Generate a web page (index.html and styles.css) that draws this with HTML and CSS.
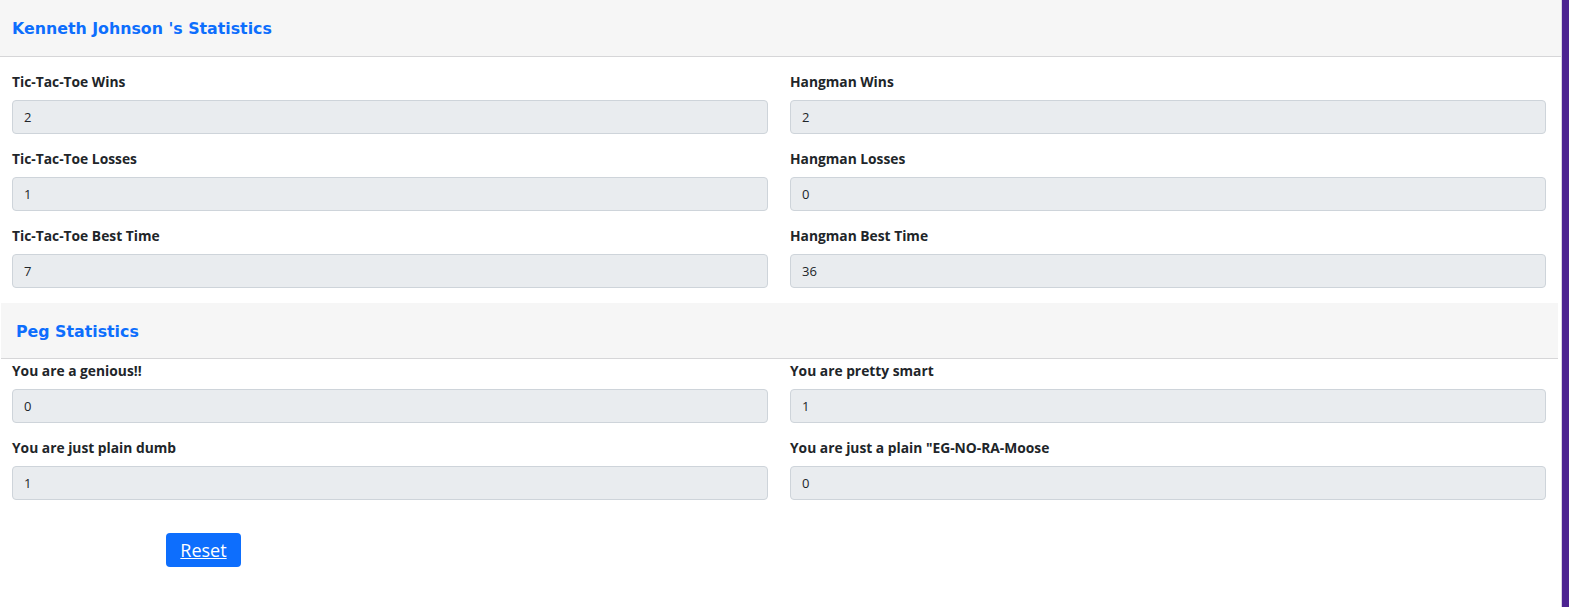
FILE: index.html
```html
<!DOCTYPE html>
<html>
<head>
<meta charset="utf-8">
<link rel="stylesheet" href="styles.css">
</head>
<body>
<div class="page">
  <main class="main">
    <section class="card">
      <div class="card-header"><h2 class="title">Kenneth Johnson 's Statistics</h2></div>
      <div class="card-body">
        <div class="grid">
          <div class="field"><label class="label">Tic-Tac-Toe Wins</label><div class="input">2</div></div>
          <div class="field"><label class="label">Hangman Wins</label><div class="input">2</div></div>
          <div class="field"><label class="label">Tic-Tac-Toe Losses</label><div class="input">1</div></div>
          <div class="field"><label class="label">Hangman Losses</label><div class="input">0</div></div>
          <div class="field"><label class="label">Tic-Tac-Toe Best Time</label><div class="input">7</div></div>
          <div class="field"><label class="label">Hangman Best Time</label><div class="input">36</div></div>
        </div>
      </div>
    </section>
    <section class="card peg">
      <div class="card-header peg-header"><h2 class="title peg-title">Peg Statistics</h2></div>
      <div class="card-body peg-body">
        <div class="grid">
          <div class="field"><label class="label">You are a genious!!</label><div class="input">0</div></div>
          <div class="field"><label class="label">You are pretty smart</label><div class="input">1</div></div>
          <div class="field"><label class="label">You are just plain dumb</label><div class="input">1</div></div>
          <div class="field"><label class="label">You are just a plain "EG-NO-RA-Moose</label><div class="input">0</div></div>
        </div>
        <div class="actions"><a class="btn" href="#">Reset</a></div>
      </div>
    </section>
  </main>
  <aside class="rail"></aside>
</div>
</body>
</html>
```
FILE: styles.css
```css
html, body { margin: 0; padding: 0; background: #fff; }
body { font-family: "Open Sans", "DejaVu Sans", sans-serif; color: #212529; }
.page { display: flex; height: 607px; overflow: hidden; }
.main { flex: 1; min-width: 0; }
.rail { width: 7px; background: #4c2391; border-left: 1px solid #d8d3e4; }
.card-header {
  height: 56px; background: #f6f6f6; border-bottom: 1px solid #d6d6d8;
  display: flex; align-items: center; padding-left: 12px;
}
.title { margin: 0; font-family: "DejaVu Sans", sans-serif; font-weight: bold; font-size: 15.8px; color: #0d6efd; }
.card-body { padding: 15px 15px 15px 12px; }
.grid { display: grid; grid-template-columns: 1fr 1fr; column-gap: 22px; row-gap: 15px; }
.field { display: flex; flex-direction: column; }
.label { font-weight: bold; font-size: 13.8px; line-height: 20px; margin-bottom: 8px; color: #212529; }
.input {
  height: 34px; box-sizing: border-box; background: #e9ecef; border: 1px solid #ced4da; border-radius: 4px;
  padding: 0 11px; display: flex; align-items: center; font-size: 13px;
}
.peg { margin-left: 1px; margin-right: 3px; }
.peg-header { box-sizing: border-box; height: 56px; padding-left: 15px; padding-top: 1px; }
.peg-body { padding: 2px 12px 0 11px; }
.actions { padding: 33px 0 0 154px; }
.btn {
  display: inline-flex; align-items: center; justify-content: center; width: 75px; height: 34px;
  background: #0d6efd; color: #fff; border-radius: 4px; font-size: 18px; text-decoration: underline;
}
```
